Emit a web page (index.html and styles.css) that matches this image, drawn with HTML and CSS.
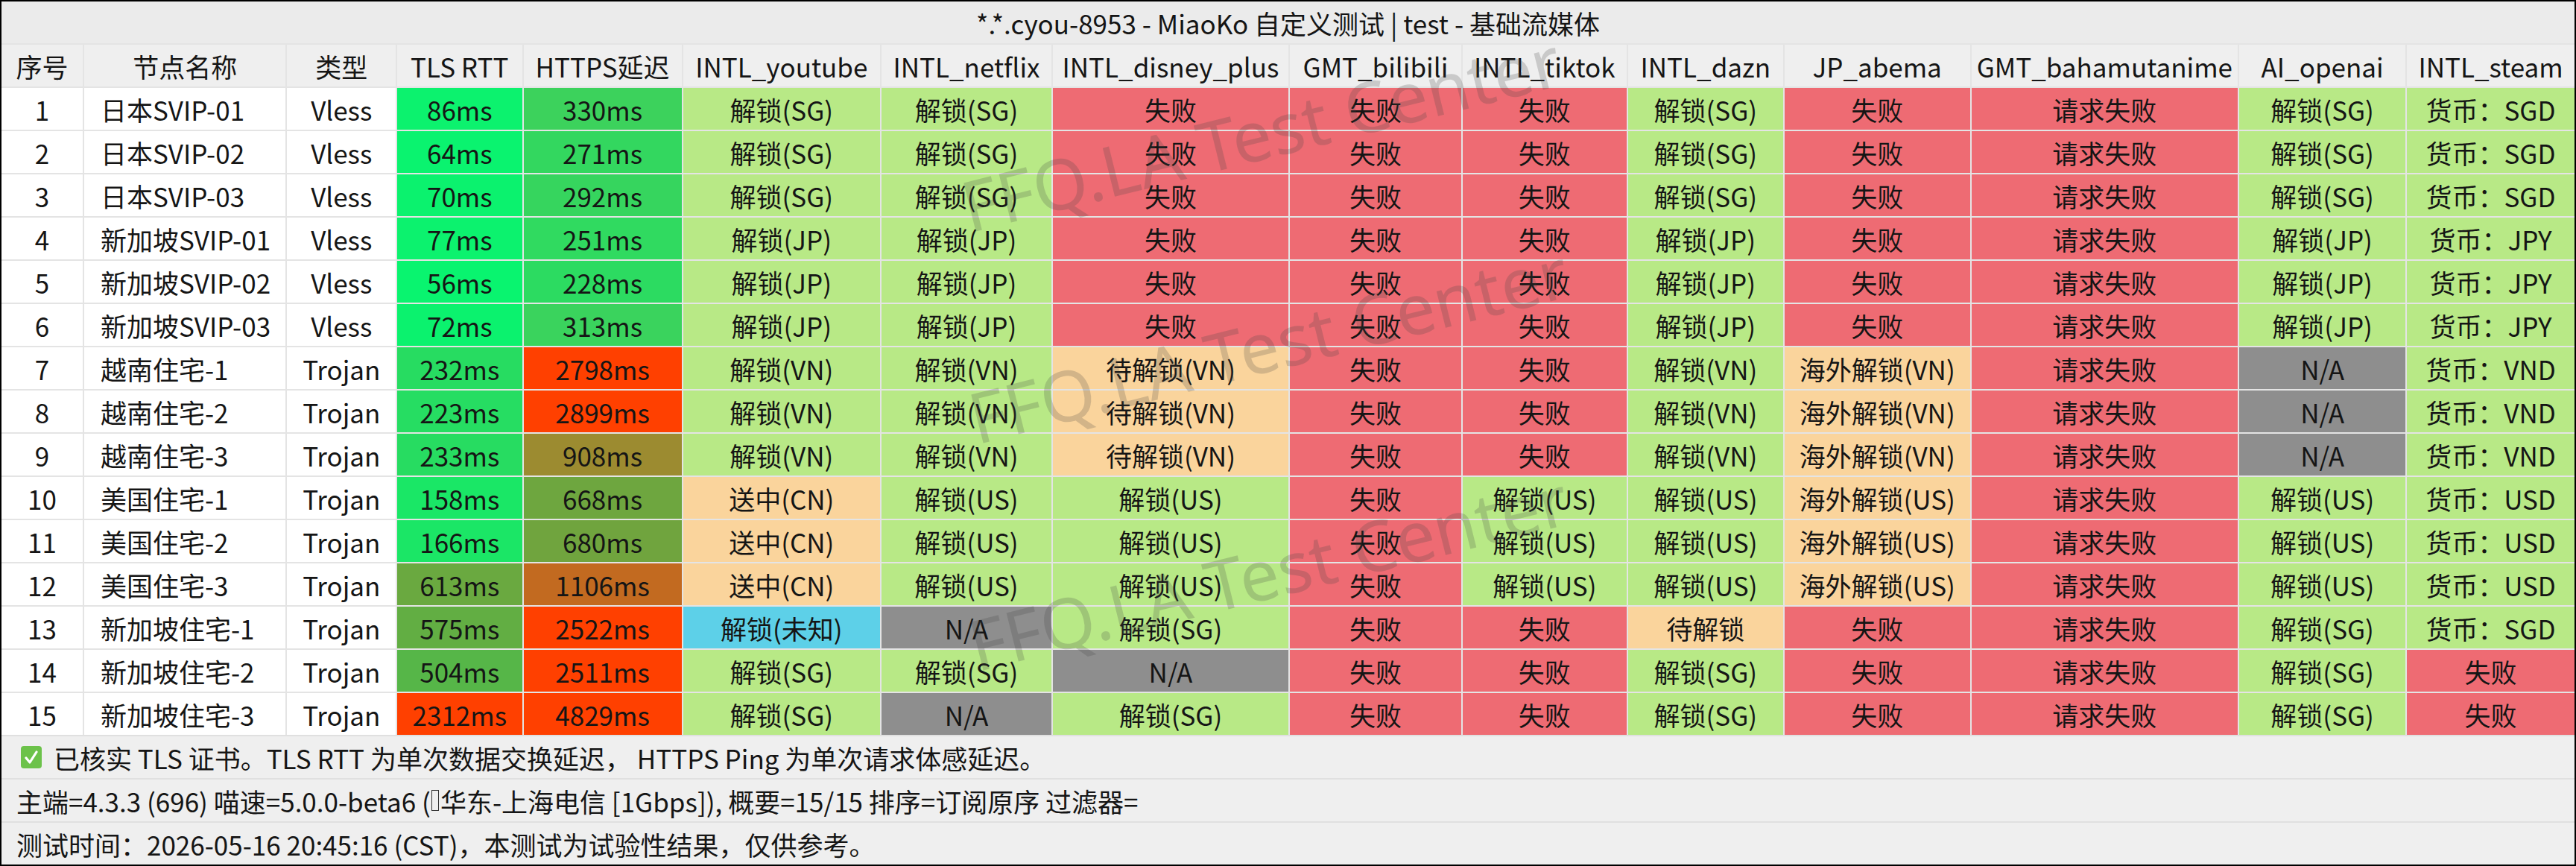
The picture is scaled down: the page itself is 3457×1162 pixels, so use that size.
FILE: index.html
```html
<!DOCTYPE html>
<html lang="zh-CN">
<head>
<meta charset="utf-8">
<title>MiaoKo 自定义测试</title>
<link rel="stylesheet" href="styles.css">
</head>
<body>
<div class="frame">
  <div class="title">*.*.cyou-8953 - MiaoKo 自定义测试 | test - 基础流媒体</div>
  <div class="grid">
    <div class="c hd">序号</div><div class="c hd">节点名称</div><div class="c hd">类型</div><div class="c hd">TLS RTT</div><div class="c hd">HTTPS延迟</div><div class="c hd">INTL_youtube</div><div class="c hd">INTL_netflix</div><div class="c hd">INTL_disney_plus</div><div class="c hd">GMT_bilibili</div><div class="c hd">INTL_tiktok</div><div class="c hd">INTL_dazn</div><div class="c hd">JP_abema</div><div class="c hd">GMT_bahamutanime</div><div class="c hd">AI_openai</div><div class="c hd">INTL_steam</div>

    <div class="c w">1</div><div class="c w nm">日本SVIP-01</div><div class="c w">Vless</div><div class="c" style="background:#0cf26e">86ms</div><div class="c" style="background:#3cd25c">330ms</div><div class="c ok">解锁(SG)</div><div class="c ok">解锁(SG)</div><div class="c no">失败</div><div class="c no">失败</div><div class="c no">失败</div><div class="c ok">解锁(SG)</div><div class="c no">失败</div><div class="c no">请求失败</div><div class="c ok">解锁(SG)</div><div class="c ok">货币：SGD</div>

    <div class="c w">2</div><div class="c w nm">日本SVIP-02</div><div class="c w">Vless</div><div class="c" style="background:#0af36f">64ms</div><div class="c" style="background:#33d75f">271ms</div><div class="c ok">解锁(SG)</div><div class="c ok">解锁(SG)</div><div class="c no">失败</div><div class="c no">失败</div><div class="c no">失败</div><div class="c ok">解锁(SG)</div><div class="c no">失败</div><div class="c no">请求失败</div><div class="c ok">解锁(SG)</div><div class="c ok">货币：SGD</div>

    <div class="c w">3</div><div class="c w nm">日本SVIP-03</div><div class="c w">Vless</div><div class="c" style="background:#0bf26e">70ms</div><div class="c" style="background:#36d55e">292ms</div><div class="c ok">解锁(SG)</div><div class="c ok">解锁(SG)</div><div class="c no">失败</div><div class="c no">失败</div><div class="c no">失败</div><div class="c ok">解锁(SG)</div><div class="c no">失败</div><div class="c no">请求失败</div><div class="c ok">解锁(SG)</div><div class="c ok">货币：SGD</div>

    <div class="c w">4</div><div class="c w nm">新加坡SVIP-01</div><div class="c w">Vless</div><div class="c" style="background:#0cf26e">77ms</div><div class="c" style="background:#30da60">251ms</div><div class="c ok">解锁(JP)</div><div class="c ok">解锁(JP)</div><div class="c no">失败</div><div class="c no">失败</div><div class="c no">失败</div><div class="c ok">解锁(JP)</div><div class="c no">失败</div><div class="c no">请求失败</div><div class="c ok">解锁(JP)</div><div class="c ok">货币：JPY</div>

    <div class="c w">5</div><div class="c w nm">新加坡SVIP-02</div><div class="c w">Vless</div><div class="c" style="background:#09f46f">56ms</div><div class="c" style="background:#2cdb61">228ms</div><div class="c ok">解锁(JP)</div><div class="c ok">解锁(JP)</div><div class="c no">失败</div><div class="c no">失败</div><div class="c no">失败</div><div class="c ok">解锁(JP)</div><div class="c no">失败</div><div class="c no">请求失败</div><div class="c ok">解锁(JP)</div><div class="c ok">货币：JPY</div>

    <div class="c w">6</div><div class="c w nm">新加坡SVIP-03</div><div class="c w">Vless</div><div class="c" style="background:#0bf26e">72ms</div><div class="c" style="background:#3ad35d">313ms</div><div class="c ok">解锁(JP)</div><div class="c ok">解锁(JP)</div><div class="c no">失败</div><div class="c no">失败</div><div class="c no">失败</div><div class="c ok">解锁(JP)</div><div class="c no">失败</div><div class="c no">请求失败</div><div class="c ok">解锁(JP)</div><div class="c ok">货币：JPY</div>

    <div class="c w">7</div><div class="c w nm">越南住宅-1</div><div class="c w">Trojan</div><div class="c" style="background:#27dc61">232ms</div><div class="c" style="background:#ff4000">2798ms</div><div class="c ok">解锁(VN)</div><div class="c ok">解锁(VN)</div><div class="c pd">待解锁(VN)</div><div class="c no">失败</div><div class="c no">失败</div><div class="c ok">解锁(VN)</div><div class="c pd">海外解锁(VN)</div><div class="c no">请求失败</div><div class="c na">N/A</div><div class="c ok">货币：VND</div>

    <div class="c w">8</div><div class="c w nm">越南住宅-2</div><div class="c w">Trojan</div><div class="c" style="background:#26dd62">223ms</div><div class="c" style="background:#ff4000">2899ms</div><div class="c ok">解锁(VN)</div><div class="c ok">解锁(VN)</div><div class="c pd">待解锁(VN)</div><div class="c no">失败</div><div class="c no">失败</div><div class="c ok">解锁(VN)</div><div class="c pd">海外解锁(VN)</div><div class="c no">请求失败</div><div class="c na">N/A</div><div class="c ok">货币：VND</div>

    <div class="c w">9</div><div class="c w nm">越南住宅-3</div><div class="c w">Trojan</div><div class="c" style="background:#27dc61">233ms</div><div class="c" style="background:#9c8b30">908ms</div><div class="c ok">解锁(VN)</div><div class="c ok">解锁(VN)</div><div class="c pd">待解锁(VN)</div><div class="c no">失败</div><div class="c no">失败</div><div class="c ok">解锁(VN)</div><div class="c pd">海外解锁(VN)</div><div class="c no">请求失败</div><div class="c na">N/A</div><div class="c ok">货币：VND</div>

    <div class="c w">10</div><div class="c w nm">美国住宅-1</div><div class="c w">Trojan</div><div class="c" style="background:#1ae766">158ms</div><div class="c" style="background:#6ea63f">668ms</div><div class="c pd">送中(CN)</div><div class="c ok">解锁(US)</div><div class="c ok">解锁(US)</div><div class="c no">失败</div><div class="c ok">解锁(US)</div><div class="c ok">解锁(US)</div><div class="c pd">海外解锁(US)</div><div class="c no">请求失败</div><div class="c ok">解锁(US)</div><div class="c ok">货币：USD</div>

    <div class="c w">11</div><div class="c w nm">美国住宅-2</div><div class="c w">Trojan</div><div class="c" style="background:#1be666">166ms</div><div class="c" style="background:#70a43e">680ms</div><div class="c pd">送中(CN)</div><div class="c ok">解锁(US)</div><div class="c ok">解锁(US)</div><div class="c no">失败</div><div class="c ok">解锁(US)</div><div class="c ok">解锁(US)</div><div class="c pd">海外解锁(US)</div><div class="c no">请求失败</div><div class="c ok">解锁(US)</div><div class="c ok">货币：USD</div>

    <div class="c w">12</div><div class="c w nm">美国住宅-3</div><div class="c w">Trojan</div><div class="c" style="background:#6aa940">613ms</div><div class="c" style="background:#c26a20">1106ms</div><div class="c pd">送中(CN)</div><div class="c ok">解锁(US)</div><div class="c ok">解锁(US)</div><div class="c no">失败</div><div class="c ok">解锁(US)</div><div class="c ok">解锁(US)</div><div class="c pd">海外解锁(US)</div><div class="c no">请求失败</div><div class="c ok">解锁(US)</div><div class="c ok">货币：USD</div>

    <div class="c w">13</div><div class="c w nm">新加坡住宅-1</div><div class="c w">Trojan</div><div class="c" style="background:#62ae43">575ms</div><div class="c" style="background:#ff4000">2522ms</div><div class="c uk">解锁(未知)</div><div class="c na">N/A</div><div class="c ok">解锁(SG)</div><div class="c no">失败</div><div class="c no">失败</div><div class="c pd">待解锁</div><div class="c no">失败</div><div class="c no">请求失败</div><div class="c ok">解锁(SG)</div><div class="c ok">货币：SGD</div>

    <div class="c w">14</div><div class="c w nm">新加坡住宅-2</div><div class="c w">Trojan</div><div class="c" style="background:#56b648">504ms</div><div class="c" style="background:#ff4000">2511ms</div><div class="c ok">解锁(SG)</div><div class="c ok">解锁(SG)</div><div class="c na">N/A</div><div class="c no">失败</div><div class="c no">失败</div><div class="c ok">解锁(SG)</div><div class="c no">失败</div><div class="c no">请求失败</div><div class="c ok">解锁(SG)</div><div class="c no">失败</div>

    <div class="c w">15</div><div class="c w nm">新加坡住宅-3</div><div class="c w">Trojan</div><div class="c" style="background:#ff4000">2312ms</div><div class="c" style="background:#ff4000">4829ms</div><div class="c ok">解锁(SG)</div><div class="c na">N/A</div><div class="c ok">解锁(SG)</div><div class="c no">失败</div><div class="c no">失败</div><div class="c ok">解锁(SG)</div><div class="c no">失败</div><div class="c no">请求失败</div><div class="c ok">解锁(SG)</div><div class="c no">失败</div>
  </div>
  <div class="foot"><svg class="chk" viewBox="0 0 28 30" width="28" height="30"><rect x="0" y="0" width="28" height="30" rx="4" fill="#6cc24a"/><path d="M7 16 L12 22 L21 8" fill="none" stroke="#fff" stroke-width="3.2" stroke-linecap="round" stroke-linejoin="round"/></svg><span>已核实 TLS 证书。TLS RTT 为单次数据交换延迟， HTTPS Ping 为单次请求体感延迟。</span></div>
  <div class="foot">主端=4.3.3 (696) 喵速=5.0.0-beta6 (<span class="tofu"></span>华东-上海电信 [1Gbps]), 概要=15/15 排序=订阅原序 过滤器=</div>
  <div class="foot">测试时间：2026-05-16 20:45:16 (CST)，本测试为试验性结果，仅供参考。</div>

  <div class="wm wm1">FFQ.LA Test Center</div>
  <div class="wm wm2">FFQ.LA Test Center</div>
  <div class="wm wm3">FFQ.LA Test Center</div>
</div>
</body>
</html>
```

FILE: styles.css
```css
html, body {
  margin: 0;
  padding: 0;
}
body {
  width: 3457px;
  height: 1162px;
  overflow: hidden;
  background: #000;
  font-family: "Noto Sans CJK SC", "Noto Sans", sans-serif;
  color: #151515;
}
.frame {
  position: relative;
  box-sizing: border-box;
  width: 3457px;
  height: 1162px;
  border: 2px solid #000;
  background: #ececec;
  display: flex;
  flex-direction: column;
  overflow: hidden;
}
.title {
  height: 56px;
  flex: none;
  display: flex;
  align-items: center;
  justify-content: center;
  background: #ebebeb;
  font-size: 35px;
}
.grid {
  flex: none;
  display: grid;
  grid-template-columns: 110fr 273fr 147fr 169fr 214fr 267fr 230fr 319fr 232fr 222fr 210fr 251fr 361fr 225fr 227fr;
  grid-auto-rows: 56px;
  gap: 2px;
  padding-top: 2px;
  background: #e4e4e4;
}
.c {
  display: flex;
  align-items: center;
  justify-content: center;
  font-size: 35px;
  white-space: nowrap;
}
.hd { background: #efefef; }
.w { background: #fff; }
.nm { justify-content: flex-start; padding-left: 22px; }
.ok { background: #b8e986; }
.no { background: #ee6b73; }
.pd { background: #fad49c; }
.na { background: #8e8e8e; }
.uk { background: #5dd0e8; }
.foot {
  flex: none;
  height: 56px;
  border-top: 2px solid #e0e0e0;
  background: #efefef;
  display: flex;
  align-items: center;
  padding-left: 20px;
  font-size: 35px;
  white-space: nowrap;
}
.chk {
  margin-left: 6px;
  margin-right: 16px;
  flex: none;
}
.tofu {
  display: inline-block;
  width: 8px;
  height: 26px;
  border: 1.5px solid #333;
  margin: 0 2px 0 1px;
  vertical-align: middle;
}
.wm {
  position: absolute;
  font-family: "Noto Sans", sans-serif;
  font-size: 94px;
  color: rgba(70, 70, 70, 0.22);
  white-space: nowrap;
  pointer-events: none;
  transform: translate(-50%, -50%) rotate(-14deg);
}
.wm1 { left: 1690px; top: 176px; }
.wm2 { left: 1700px; top: 460px; }
.wm3 { left: 1700px; top: 765px; }
```
